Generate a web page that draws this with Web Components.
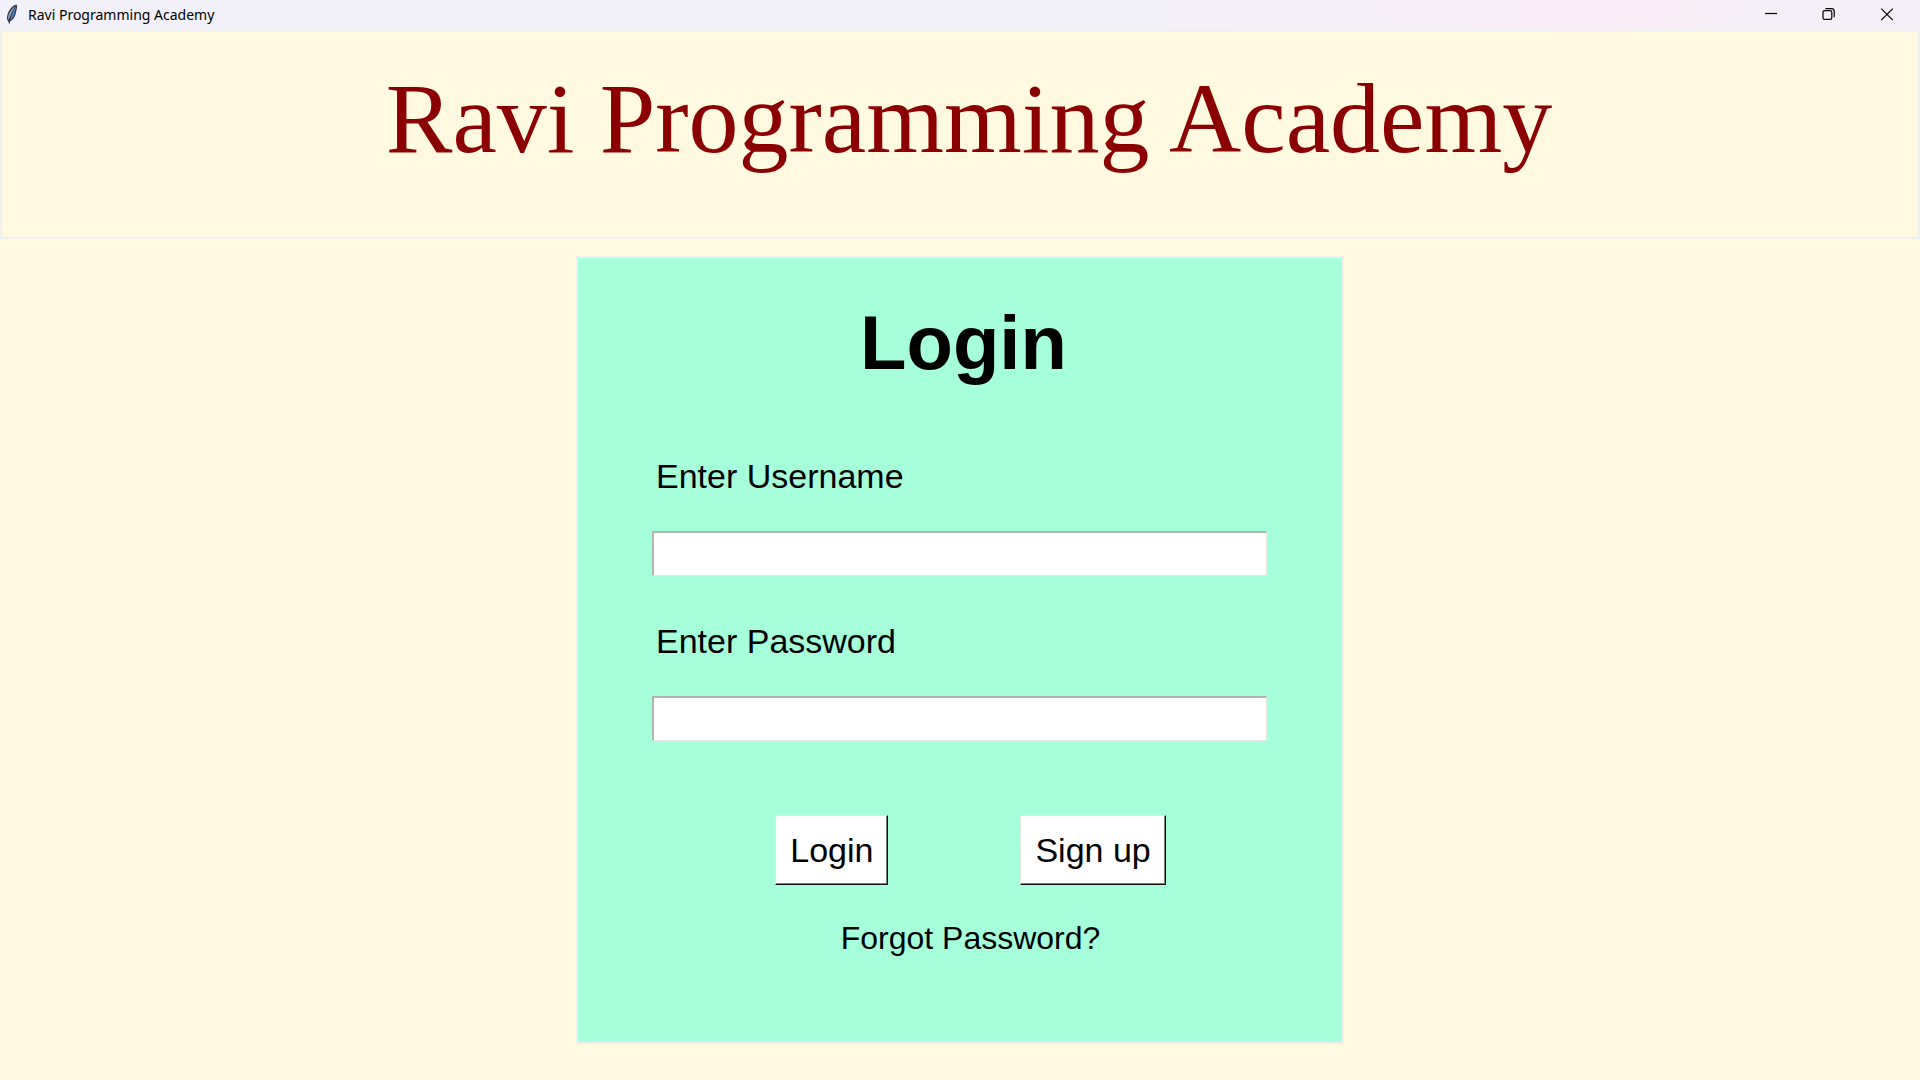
<!DOCTYPE html>
<html lang="en">
<head>
<meta charset="utf-8">
<title>Ravi Programming Academy</title>
<style>
html, body { margin: 0; background: #fff9e0; }
body { font-family: "Liberation Sans", Arial, sans-serif; color: #000; }
</style>
</head>
<body>
<app-window>
  <title-bar slot="bar">Ravi Programming Academy</title-bar>
  <page-banner>Ravi Programming Academy</page-banner>
  <login-card>
    <span slot="heading">Login</span>
    <text-field label="Enter Username" name="username"></text-field>
    <text-field label="Enter Password" name="password" type="password"></text-field>
    <raised-button slot="actions">Login</raised-button>
    <raised-button slot="actions">Sign up</raised-button>
    <span slot="forgot">Forgot Password?</span>
  </login-card>
</app-window>
<script>
class ShadowElement extends HTMLElement {
  constructor() {
    super();
    this.attachShadow({ mode: 'open' });
  }
  connectedCallback() {
    this.shadowRoot.innerHTML = this.render();
  }
}

customElements.define('app-window', class extends ShadowElement {
  render() {
    return `<style>
      :host { display: flex; flex-direction: column; min-height: 100vh; background: #fff9e0; }
      main { display: flex; flex-direction: column; align-items: center; gap: 17px; }
    </style>
    <slot name="bar"></slot>
    <main><slot></slot></main>`;
  }
});

customElements.define('title-bar', class extends ShadowElement {
  render() {
    return `<style>
      :host { display: block; font: 14px/20px "Noto Sans", "Open Sans", sans-serif; }
      header { display: flex; align-items: center; height: 30px; padding: 0 4px 0 5px;
        background: linear-gradient(90deg, #f2f0f8 0%, #f3f1f8 60%, #f6eef7 76%, #faecf6 83%, #f6eff7 90%, #f5eff7 100%); }
      .logo { width: 14px; height: 22px; margin-right: 9px; }
      .name { flex: 1; }
      button { display: flex; align-items: center; justify-content: center; width: 58px; height: 30px;
        padding: 0; border: 0; background: none; color: #000; }
      button svg { width: 14px; height: 14px; fill: none; stroke: currentColor; stroke-width: 1.2; }
    </style>
    <header>
      <svg class="logo" viewBox="0 0 14 22" aria-hidden="true">
        <path d="M11.6 .6 C7.5 1.2 3 7 2.2 12 C1.7 14.6 2.2 16.2 3.4 17.4 L4.2 20.4 L5.2 17.2 C8.6 15.8 10.2 12.2 10.8 9 C11.4 6 12.8 3 11.6 .6Z" fill="#2d2f38"/>
        <path d="M10.8 1.8 C7.4 4 4 8.4 3.2 12.6 C3 14.4 3.4 15.4 3.8 16 C5 11.6 7.4 6.6 10.8 1.8Z" fill="#9aa6bd"/>
        <path d="M11 2.6 C8 7 6 11.4 5.2 16 C7.8 14.4 9 12 9.6 9 C10.1 6.6 11.3 4.6 11 2.6Z" fill="#3f7fd0"/>
      </svg>
      <span class="name"><slot></slot></span>
      <button type="button" aria-label="Minimize"><svg viewBox="0 0 14 14"><path d="M1 5.5H13"/></svg></button>
      <button type="button" aria-label="Restore"><svg viewBox="0 0 14 14"><rect x="1" y="2.6" width="8.8" height="8.8" rx="1.6"/><path d="M3.4 .6H9.4Q12.2 .6 12.2 3.4V9.2"/></svg></button>
      <button type="button" aria-label="Close"><svg viewBox="0 0 14 14"><path d="M1.2 .6L12.8 12.2M12.8 .6L1.2 12.2"/></svg></button>
    </header>`;
  }
});

customElements.define('page-banner', class extends ShadowElement {
  render() {
    return `<style>
      :host { display: block; box-sizing: border-box; width: 100%; border: 2px solid #f0f0f0;
        padding: 32px 0 63px 18px; }
      h1 { margin: 0; text-align: center; color: #8b0000; font-kerning: none;
        font: 400 100px/110px "Liberation Serif", "Times New Roman", serif; }
    </style>
    <h1><slot></slot></h1>`;
  }
});

customElements.define('login-card', class extends ShadowElement {
  render() {
    return `<style>
      :host { display: block; box-sizing: border-box; width: 40%; min-width: 640px;
        border: 2px solid #f0f0f0; background: #a4ffda; padding: 41px 75px 86px 74px; }
      form { display: flex; flex-direction: column; }
      h2 { margin: 0 0 69px; padding-left: 8px; text-align: center; font: 700 76px/88px "Liberation Sans", Arial, sans-serif; }
      .fields { display: flex; flex-direction: column; gap: 45px; }
      .foot { display: flex; flex-direction: column; align-items: center; gap: 35px; margin-top: 74px; padding-left: 22px; }
      .actions { display: flex; gap: 132px; }
      a { color: inherit; text-decoration: none; font-size: 32px; line-height: 36px; }
    </style>
    <form>
      <h2><slot name="heading"></slot></h2>
      <div class="fields"><slot></slot></div>
      <div class="foot">
        <div class="actions"><slot name="actions"></slot></div>
        <a href="#forgot"><slot name="forgot"></slot></a>
      </div>
    </form>`;
  }
});

customElements.define('text-field', class extends ShadowElement {
  render() {
    const name = this.getAttribute('name');
    return `<style>
      :host { display: flex; flex-direction: column; gap: 35px; }
      label { padding-left: 4px; font-size: 34px; line-height: 40px; }
      input { box-sizing: border-box; width: 100%; height: 45px; margin: 0; padding: 0 6px; border-radius: 0;
        border-style: solid; border-width: 2px 1px 1px 2px; border-color: #b0b4b2 #e6e6e6 #e6e6e6 #b0b4b2;
        background: #fff; font: 34px "Liberation Sans", Arial, sans-serif; outline: 0; }
    </style>
    <label for="${name}">${this.getAttribute('label')}</label>
    <input id="${name}" name="${name}" type="${this.getAttribute('type') || 'text'}">`;
  }
});

customElements.define('raised-button', class extends ShadowElement {
  render() {
    return `<style>
      :host { display: block; }
      button { box-sizing: border-box; height: 70px; padding: 0 14px; border-radius: 0;
        border-style: solid; border-width: 1px; border-color: #e6e6e6 #101010 #101010 #e6e6e6;
        box-shadow: inset -1px -1px #808080; background: #fff; color: #000;
        font: 34px/40px "Liberation Sans", Arial, sans-serif; }
    </style>
    <button type="button"><slot></slot></button>`;
  }
});
</script>
</body>
</html>
